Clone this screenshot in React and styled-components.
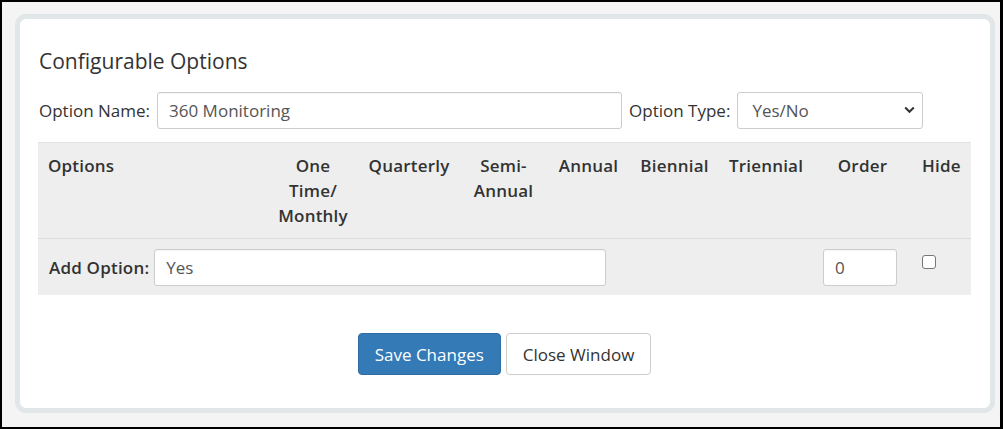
import React from 'react';
import styled, { createGlobalStyle } from 'styled-components';

const Global = createGlobalStyle`
  html, body {
    margin: 0;
    padding: 0;
    background: #f4f4f4;
  }
  * {
    box-sizing: border-box;
  }
`;

const Frame = styled.div`
  width: 1003px;
  height: 429px;
  border: 2px solid #000;
  border-right-width: 3px;
  background: #f4f4f4;
  padding: 12px 0 0 13px;
  font-family: "Open Sans", "Liberation Sans", sans-serif;
  color: #333;
`;

const Card = styled.div`
  width: 980px;
  height: 399px;
  background: #fff;
  border: 5px solid #e1e6e9;
  border-radius: 11px;
  padding: 0 19px 0 18px;
  display: flex;
  flex-direction: column;
`;

const Title = styled.h3`
  margin: 31px 0 20px 1px;
  font-size: 21px;
  font-weight: 400;
  line-height: 22px;
  color: #333;
`;

const NameRow = styled.div`
  display: flex;
  align-items: center;
  height: 37px;
  margin-left: 1px;
`;

const Label = styled.label`
  font-size: 17px;
  line-height: 24px;
  margin-right: ${(p) => p.gap || 5}px;
  margin-left: ${(p) => p.lead || 0}px;
  font-weight: ${(p) => (p.bold ? 600 : 400)};
  letter-spacing: ${(p) => (p.bold ? '0.2px' : '0')};
  white-space: nowrap;
`;

const Input = styled.input`
  width: ${(p) => (p.w ? `${p.w}px` : 'auto')};
  flex: ${(p) => (p.grow ? 1 : 'none')};
  min-width: 0;
  height: 37px;
  border: 1px solid #ccc;
  border-radius: 3px;
  padding: 0 11px;
  font-family: inherit;
  font-size: 17px;
  color: #555;
  background: #fff;
  box-shadow: inset 0 1px 1px rgba(0, 0, 0, 0.04);
  outline: none;
`;

const SelectWrap = styled.div`
  position: relative;
  width: 186px;
  height: 37px;
`;

const Select = styled.select`
  appearance: none;
  width: 100%;
  height: 100%;
  border: 1px solid #ccc;
  border-radius: 3px;
  padding: 0 14px;
  font-family: inherit;
  font-size: 17px;
  color: #555;
  background: #fff;
  outline: none;
`;

const Chevron = styled.svg`
  position: absolute;
  right: 8px;
  top: 14px;
  pointer-events: none;
`;

const Table = styled.div`
  margin-top: 13px;
  display: grid;
  grid-template-columns: 230px 90px 102px 87px 83px 89px 94px 99px 59px;
  background: #eeeeee;
  border-top: 1px solid #e2e2e2;
`;

const Head = styled.div`
  padding: 10px 4px 10px;
  font-size: 17px;
  font-weight: 600;
  letter-spacing: 0.2px;
  line-height: 25px;
  text-align: ${(p) => p.align || 'center'};
  padding-left: ${(p) => (p.align === 'left' ? '10px' : '4px')};
  border-bottom: 1px solid #dcdcdc;
`;

const Cell = styled.div`
  padding: 10px ${(p) => p.pr || 10}px 9px ${(p) => p.pl || 10}px;
  grid-column: ${(p) => p.span || 'auto'};
  display: flex;
  align-items: ${(p) => (p.top ? 'flex-start' : 'center')};
`;

const Check = styled.span`
  display: block;
  width: 14px;
  height: 14px;
  margin-top: 6px;
  border: 1px solid #767676;
  border-radius: 3px;
  background: #fff;
`;

const Actions = styled.div`
  display: flex;
  justify-content: center;
  gap: 5px;
  margin-top: 38px;
`;

const Button = styled.button`
  height: 42px;
  padding: 0 16px;
  font-family: inherit;
  font-size: 17px;
  border-radius: 4px;
  border: 1px solid ${(p) => (p.primary ? '#2e6da4' : '#ccc')};
  background: ${(p) => (p.primary ? '#337ab7' : '#fff')};
  color: ${(p) => (p.primary ? '#fff' : '#333')};
  cursor: pointer;
`;

const heads = [
  { text: 'Options', align: 'left' },
  { text: <>One<br />Time/<br />Monthly</> },
  { text: 'Quarterly' },
  { text: <>Semi-<br />Annual</> },
  { text: 'Annual' },
  { text: 'Biennial' },
  { text: 'Triennial' },
  { text: 'Order' },
  { text: 'Hide', align: 'left' },
];

export default function App() {
  return (
    <>
      <Global />
      <Frame>
        <Card>
          <Title>Configurable Options</Title>
          <NameRow>
            <Label gap={7}>Option Name:</Label>
            <Input w={465} defaultValue="360 Monitoring" />
            <Label lead={7} gap={7}>Option Type:</Label>
            <SelectWrap>
              <Select defaultValue="yesno">
                <option value="dropdown">Dropdown</option>
                <option value="radio">Radio</option>
                <option value="yesno">Yes/No</option>
                <option value="quantity">Quantity</option>
              </Select>
              <Chevron width="11" height="8" viewBox="0 0 11 8">
                <path d="M1.2 1.5 L5.5 5.8 L9.8 1.5" fill="none" stroke="#333" strokeWidth="2" />
              </Chevron>
            </SelectWrap>
          </NameRow>
          <Table>
            {heads.map((h, i) => (
              <Head key={i} align={h.align}>{h.text}</Head>
            ))}
            <Cell span="1 / 6" pl={11} pr={24}>
              <Label bold gap={5}>Add Option:</Label>
              <Input grow defaultValue="Yes" />
            </Cell>
            <Cell span="6 / 8" />
            <Cell>
              <Input w={74} defaultValue="0" />
            </Cell>
            <Cell top>
              <Check />
            </Cell>
          </Table>
          <Actions>
            <Button primary>Save Changes</Button>
            <Button>Close Window</Button>
          </Actions>
        </Card>
      </Frame>
    </>
  );
}
